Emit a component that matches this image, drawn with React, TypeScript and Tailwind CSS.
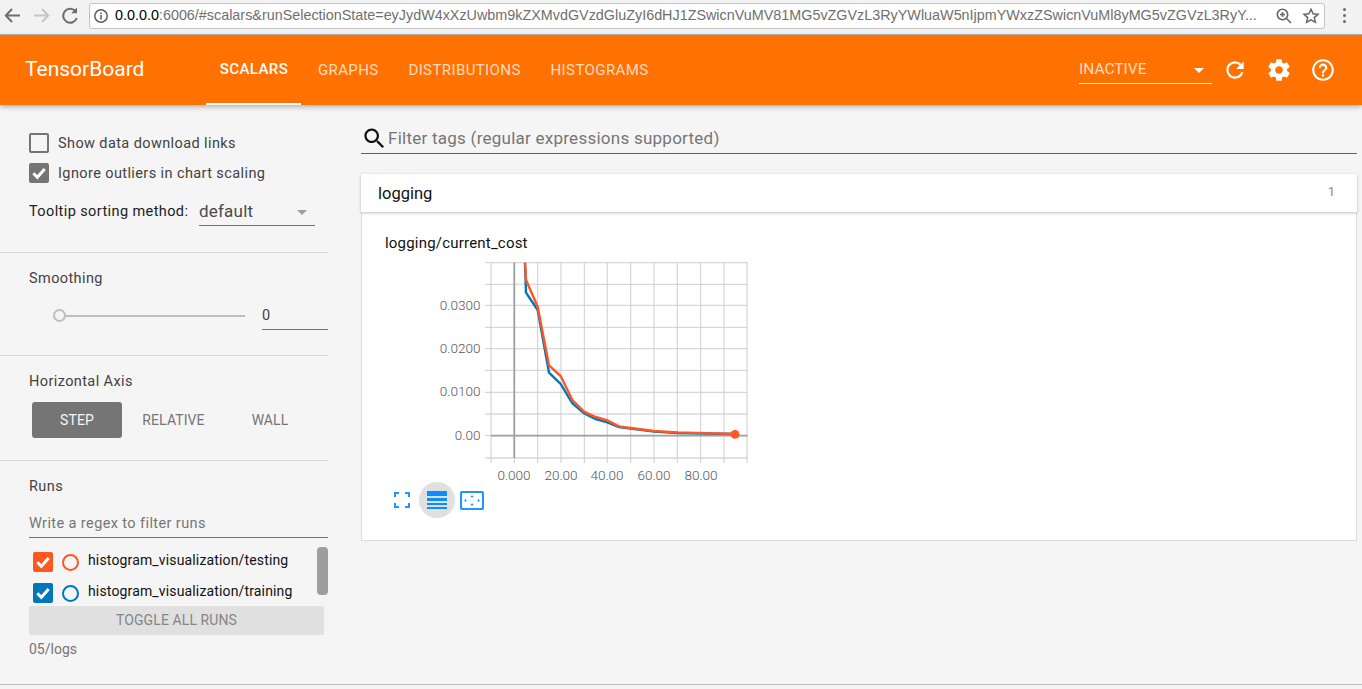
const GEAR = "M19.43 12.98c.04-.32.07-.64.07-.98s-.03-.66-.07-.98l2.11-1.65c.19-.15.24-.42.12-.64l-2-3.46c-.12-.22-.39-.3-.61-.22l-2.49 1c-.52-.4-1.08-.73-1.69-.98l-.38-2.65C14.46 2.18 14.25 2 14 2h-4c-.25 0-.46.18-.49.42l-.38 2.65c-.61.25-1.17.59-1.69.98l-2.49-1c-.23-.09-.49 0-.61.22l-2 3.46c-.13.22-.07.49.12.64l2.11 1.65c-.04.32-.07.65-.07.98s.03.66.07.98l-2.11 1.65c-.19.15-.24.42-.12.64l2 3.46c.12.22.39.3.61.22l2.49-1c.52.4 1.08.73 1.69.98l.38 2.65c.03.24.24.42.49.42h4c.25 0 .46-.18.49-.42l.38-2.65c.61-.25 1.17-.59 1.69-.98l2.49 1c.23.09.49 0 .61-.22l2-3.46c.12-.22.07-.49-.12-.64l-2.11-1.65zM12 15.5c-1.93 0-3.5-1.57-3.5-3.5s1.57-3.5 3.5-3.5 3.5 1.57 3.5 3.5-1.57 3.5-3.5 3.5z";
const REFRESH = "M17.65 6.35C16.2 4.9 14.21 4 12 4c-4.42 0-7.99 3.58-7.99 8s3.57 8 7.99 8c3.73 0 6.84-2.55 7.73-6h-2.08c-.82 2.33-3.04 4-5.65 4-3.31 0-6-2.69-6-6s2.69-6 6-6c1.66 0 3.14.69 4.22 1.78L13 11h7V4l-2.35 2.35z";
const HELP = "M11 18h2v-2h-2v2zm1-16C6.48 2 2 6.48 2 12s4.48 10 10 10 10-4.48 10-10S17.52 2 12 2zm0 18c-4.41 0-8-3.59-8-8s3.59-8 8-8 8 3.59 8 8-3.59 8-8 8zm0-14c-2.21 0-4 1.79-4 4h2c0-1.1.9-2 2-2s2 .9 2 2c0 2-3 1.75-3 5h2c0-2.25 3-2.5 3-5 0-2.21-1.79-4-4-4z";
const SEARCH = "M15.5 14h-.79l-.28-.27C15.41 12.59 16 11.11 16 9.5 16 5.91 13.09 3 9.5 3S3 5.91 3 9.5 5.91 16 9.5 16c1.61 0 3.09-.59 4.23-1.57l.27.28v.79l5 4.99L20.49 19l-4.99-5zm-6 0C7.01 14 5 11.99 5 9.5S7.01 5 9.5 5 14 7.01 14 9.5 11.99 14 9.5 14z";

function Mat({ d, size, color }: { d: string; size: number; color: string }) {
  return (
    <svg width={size} height={size} viewBox="0 0 24 24" fill={color} className="shrink-0">
      <path d={d} />
    </svg>
  );
}

function Check({ size = 16 }: { size?: number }) {
  return (
    <svg width={size} height={size} viewBox="0 0 24 24" fill="none" stroke="#fff" strokeWidth="4.4">
      <path d="M3.5 12.5l6 6L20.5 6" />
    </svg>
  );
}

function BrowserBar() {
  return (
    <div className="h-[35px] shrink-0 bg-[#f2f2f2] border-b border-[#b4b4b4] flex items-center pl-[2px] pr-[8px] pb-[3px]">
      <svg width="84" height="24" viewBox="0 0 84 24" fill="none" strokeWidth="2" className="shrink-0">
        <path d="M18 12H4M10 5.5L3.8 12l6.2 6.5" stroke="#6e6e6e" transform="translate(0 -0.5)" />
        <path d="M32 12h14M40 5.5l6.2 6.5-6.2 6.5" stroke="#c6c6c6" transform="translate(0 -0.5)" />
        <path d="M73.5 7.2A7 7 0 1 0 74.8 14" stroke="#6e6e6e" />
        <path d="M75 3.5v5.8h-5.8z" fill="#6e6e6e" />
      </svg>
      <div className="ml-[3px] flex-1 min-w-0 h-[26px] bg-white border border-[#c4c4c4] rounded-[3px] flex items-center pl-[4px] pr-[4px] font-['Liberation_Sans',sans-serif] text-[14.36px] text-[#6f6f6f]">
        <svg width="16" height="16" viewBox="0 0 16 16" className="ml-[-1px] shrink-0" fill="none">
          <circle cx="8" cy="8" r="6.2" stroke="#5f5f5f" strokeWidth="1.5" />
          <path d="M8 7v4.4M8 4.4v1.5" stroke="#5f5f5f" strokeWidth="1.6" />
        </svg>
        <span className="ml-[6px] whitespace-nowrap overflow-hidden flex-1 min-w-0">
          <span className="text-black">0.0.0.0</span>:6006/#scalars&amp;runSelectionState=eyJydW4xXzUwbm9kZXMvdGVzdGluZyI6dHJ1ZSwicnVuMV81MG5vZGVzL3RyYWluaW5nIjpmYWxzZSwicnVuMl8yMG5vZGVzL3RyY...
        </span>
        <svg width="18" height="18" viewBox="0 0 18 18" fill="none" stroke="#666" strokeWidth="1.6" className="ml-[14px] shrink-0">
          <circle cx="7.5" cy="7.5" r="5.2" />
          <path d="M11.5 11.5L16 16M5 7.5h5M7.5 5v5" />
        </svg>
        <svg width="18" height="18" viewBox="0 0 24 24" fill="none" stroke="#666" strokeWidth="2" className="ml-[9px] shrink-0">
          <path d="M12 3l2.8 6 6.5.7-4.9 4.4 1.4 6.4L12 17.2l-5.8 3.3 1.4-6.4L2.7 9.7 9.2 9z" />
        </svg>
      </div>
      <div className="w-[29px] flex flex-col items-center gap-[3px] shrink-0 pl-[9px]">
        <div className="w-[3px] h-[3px] rounded-full bg-[#6a6a6a]" />
        <div className="w-[3px] h-[3px] rounded-full bg-[#6a6a6a]" />
        <div className="w-[3px] h-[3px] rounded-full bg-[#6a6a6a]" />
      </div>
    </div>
  );
}

function Header() {
  const tabs = ["GRAPHS", "DISTRIBUTIONS", "HISTOGRAMS"];
  return (
    <header className="relative z-10 h-[70px] shrink-0 bg-[#ff7100] shadow-[0_2px_5px_rgba(0,0,0,0.28)] flex items-stretch pl-[25px] text-white">
      <div className="w-[181px] flex items-center text-[21px]">TensorBoard</div>
      <div className="flex">
        <div className="flex items-center text-[15px] font-medium tracking-[0.4px] border-b-2 border-white w-[95px] justify-center pl-[1px]">SCALARS</div>
        <div className="flex ml-[2px]">
          {tabs.map((t) => (
            <div key={t} className="px-[14.9px] flex items-center text-[15px] tracking-[0.4px] text-white/75">{t}</div>
          ))}
        </div>
      </div>
      <div className="ml-auto flex items-center pr-[26px]">
        <div className="w-[133px] h-[28px] mt-[-1px] border-b border-white/90 flex items-center justify-between text-[15.5px] text-white/75 pr-[8px] pt-[2px]">
          <span>INACTIVE</span>
          <div className="w-0 h-0 border-x-[5px] border-x-transparent border-t-[5px] border-t-white" />
        </div>
        <div className="ml-[10px]"><Mat d={REFRESH} size={26} color="#fff" /></div>
        <div className="ml-[18px]"><Mat d={GEAR} size={26} color="#fff" /></div>
        <div className="ml-[18px]"><Mat d={HELP} size={26} color="#fff" /></div>
      </div>
    </header>
  );
}

function Sidebar() {
  return (
    <aside className="w-[328px] shrink-0 text-[14.5px] tracking-[0.4px] text-[#424242]">
      <section className="h-[148px] border-b border-[#d9d9d9] pl-[29px] pt-[28px]">
        <div className="flex items-center h-[20px] gap-[9px]">
          <div className="w-[20px] h-[20px] rounded-[2px] border-2 border-[#757575]" />
          <span className="pt-[1px]">Show data download links</span>
        </div>
        <div className="flex items-center h-[20px] mt-[10px] gap-[9px]">
          <div className="w-[20px] h-[20px] rounded-[2px] bg-[#757575] flex items-center justify-center"><Check /></div>
          <span className="pt-[1px]">Ignore outliers in chart scaling</span>
        </div>
        <div className="flex items-center mt-[15px] h-[28px]">
          <span className="text-[#212121] w-[170px]">Tooltip sorting method:</span>
          <div className="w-[116px] h-[28px] border-b border-[#757575] flex items-center justify-between pr-[8px] text-[17px] tracking-[0.2px] text-[#4a4a4a] pt-[1px]">
            <span>default</span>
            <div className="w-0 h-0 border-x-[5px] border-x-transparent border-t-[5px] border-t-[#9e9e9e]" />
          </div>
        </div>
      </section>
      <section className="h-[103px] border-b border-[#d9d9d9] pl-[29px] pt-[16px]">
        <div className="leading-[20px]">Smoothing</div>
        <div className="flex items-center mt-[12px] h-[29px]">
          <div className="ml-[24px] w-[192px] flex items-center">
            <div className="w-[13px] h-[13px] rounded-full border-2 border-[#bdbdbd] shrink-0" />
            <div className="flex-1 h-[2px] bg-[#bdbdbd]" />
          </div>
          <div className="ml-[17px] w-[66px] h-[29px] border-b border-[#757575] flex items-center text-[14.5px] text-[#424242] pt-[2px]">0</div>
        </div>
      </section>
      <section className="h-[105px] border-b border-[#d9d9d9] pl-[29px] pt-[16px]">
        <div className="leading-[20px]">Horizontal Axis</div>
        <div className="flex items-center mt-[10px] pl-[3px] text-[14px] tracking-[0.1px]">
          <div className="w-[90px] h-[36px] rounded-[3px] bg-[#757575] text-[#f5f5f5] flex items-center justify-center">STEP</div>
          <div className="w-[103px] text-center text-[#757575]">RELATIVE</div>
          <div className="w-[90px] text-center text-[#757575]">WALL</div>
        </div>
      </section>
      <section className="relative pl-[29px] pt-[16px]">
        <div className="leading-[20px]">Runs</div>
        <div className="mt-[10px] h-[31px] border-b border-[#757575] text-[#757575] flex items-center pt-[3px]">Write a regex to filter runs</div>
        <div className="text-[#111] pl-[4px] pt-[14px]">
          <div className="flex items-center h-[20px]">
            <div className="w-[20px] h-[20px] rounded-[2px] bg-[#ff5722] flex items-center justify-center"><Check /></div>
            <div className="ml-[9px] w-[17px] h-[17px] rounded-full border-2 border-[#ff5722]" />
            <span className="ml-[9px] text-[14px] tracking-[0.15px] mt-[-3px]">histogram_visualization/testing</span>
          </div>
          <div className="flex items-center h-[20px] mt-[11px]">
            <div className="w-[20px] h-[20px] rounded-[2px] bg-[#0077bb] flex items-center justify-center"><Check /></div>
            <div className="ml-[9px] w-[17px] h-[17px] rounded-full border-2 border-[#0077bb]" />
            <span className="ml-[9px] text-[14px] tracking-[0.15px] mt-[-3px]">histogram_visualization/training</span>
          </div>
        </div>
        <div className="absolute left-[317px] top-[86px] w-[11px] h-[48px] rounded-[4px] bg-[#9e9e9e]" />
        <div className="mt-[3px] w-[295px] h-[29px] rounded-[2px] bg-[#e0e0e0] text-[#858585] text-[14px] tracking-[0.1px] flex items-center justify-center">TOGGLE ALL RUNS</div>
        <div className="mt-[4px] leading-[20px] text-[#757575] text-[14px] tracking-normal">05/logs</div>
      </section>
    </aside>
  );
}

const sx = (z: number) => 370 + z / 3;
const sy = (z: number) => 230 + z / 3;
const poly = (pts: number[][]) => pts.map(([x, y]) => `${sx(x)},${sy(y)}`).join(" ");

function Chart() {
  const vx = [491, 514.3, 537.7, 561, 584.3, 607.3, 630.7, 654, 677.3, 700.7, 724, 747];
  const hy = [262.7, 284.3, 305.3, 327.3, 348.7, 370.3, 392.3, 414, 435.7, 458];
  const blue = [[465, 98], [468, 188], [503, 240], [537, 428], [572, 462], [607, 520], [642, 550], [677, 567], [712, 577], [747, 591], [782, 596], [852, 605], [922, 609], [1096, 612]];
  const orange = [[465, 98], [468, 150], [503, 230], [537, 406], [572, 438], [607, 510], [642, 545], [677, 561], [712, 571], [747, 589], [782, 594], [852, 603], [922, 607], [1096, 612]];
  const yl: [string, number][] = [["0.0300", 309.5], ["0.0200", 352.5], ["0.0100", 395.5], ["0.00", 439.5]];
  const xl: [string, number][] = [["0.000", 514], ["20.00", 561], ["40.00", 607], ["60.00", 654], ["80.00", 701]];
  return (
    <svg width="330" height="228" viewBox="430 258 330 228" className="block">
      {hy.map((y) => <line key={y} x1="485" x2="747.5" y1={y} y2={y} stroke="#d8d8d8" strokeWidth="1.3" />)}
      {vx.map((x) => <line key={x} x1={x} x2={x} y1="262.5" y2="463" stroke="#cdcdcd" strokeWidth="1" />)}
      <line x1="514.3" x2="514.3" y1="262.5" y2="458" stroke="#a0a0a0" strokeWidth="1.8" />
      <line x1="491" x2="747.5" y1="435.7" y2="435.7" stroke="#a0a0a0" strokeWidth="1.8" />
      <polyline points={poly(blue)} fill="none" stroke="#0077bb" strokeWidth="2.4" />
      <polyline points={poly(orange)} fill="none" stroke="#ff5722" strokeWidth="2.4" />
      <circle cx="735" cy="434.3" r="4.4" fill="#ff5722" />
      {yl.map(([t, y]) => <text key={t} x="480.5" y={y} textAnchor="end" fontSize="13.5" fontWeight="300" fill="#55555c" fontFamily="Roboto,sans-serif">{t}</text>)}
      {xl.map(([t, x]) => <text key={t} x={x} y="479.5" textAnchor="middle" fontSize="13.5" fontWeight="300" fill="#55555c" fontFamily="Roboto,sans-serif">{t}</text>)}
    </svg>
  );
}

function ChartTools() {
  return (
    <div className="flex items-center pl-[9px]">
      <svg width="16" height="16" viewBox="0 0 16 16" fill="none" stroke="#1e97ff" strokeWidth="2">
        <path d="M1 5V1h4M11 1h4v4M15 11v4h-4M5 15H1v-4" />
      </svg>
      <div className="ml-[9px] w-[36px] h-[36px] rounded-full bg-[#e0e0e0] flex items-center justify-center">
        <svg width="20" height="20" viewBox="0 0 20 20" fill="#0b8cff">
          <rect x="0" y="1" width="20" height="5" />
          <rect x="0" y="8" width="20" height="3" />
          <rect x="0" y="13" width="20" height="2" />
          <rect x="0" y="17" width="20" height="2" />
        </svg>
      </div>
      <svg width="24" height="19" viewBox="0 0 24 19" fill="#1e97ff" className="ml-[5px]">
        <rect x="1" y="1" width="22" height="17" rx="1.5" fill="none" stroke="#1e97ff" strokeWidth="2.2" />
        <path d="M12 4l1.8 2.2h-3.6zM12 15l1.8-2.2h-3.6zM4 9.5l2.2-1.8v3.6zM20 9.5l-2.2-1.8v3.6z" />
      </svg>
    </div>
  );
}

function Main() {
  return (
    <main className="ml-[33px] w-[996px] shrink-0">
      <div className="mt-[18px] h-[31px] border-b border-[#616161] flex items-center">
        <Mat d={SEARCH} size={27} color="#111" />
        <span className="text-[17px] tracking-[0.25px] text-[#757575] pt-[2px]">Filter tags (regular expressions supported)</span>
      </div>
      <div className="relative mt-[20px] h-[38px] bg-white shadow-[0_1px_3px_rgba(0,0,0,0.25)] flex items-center justify-between pl-[17px] pr-[22px]">
        <span className="text-[16.5px] text-[#111] pt-[3px]">logging</span>
        <span className="text-[13px] text-[#8a8a8a] pb-[2px]">1</span>
      </div>
      <div className="h-[329px] bg-white border border-[#dcdcdc] border-t-0 pl-[23px] pt-[21px]">
        <div className="text-[15px] tracking-[0.2px] leading-[20px] text-[#111]">logging/current_cost</div>
        <div className="ml-[45px] mt-[5px]"><Chart /></div>
        <div className="mt-[-4px]"><ChartTools /></div>
      </div>
    </main>
  );
}

export default function App() {
  return (
    <div className="h-[689px] w-[1362px] overflow-hidden bg-[#f5f5f5] flex flex-col font-['Roboto',sans-serif]">
      <BrowserBar />
      <Header />
      <div className="flex h-[580px] shrink-0 border-b border-[#bdbdbd]">
        <Sidebar />
        <Main />
      </div>
    </div>
  );
}
